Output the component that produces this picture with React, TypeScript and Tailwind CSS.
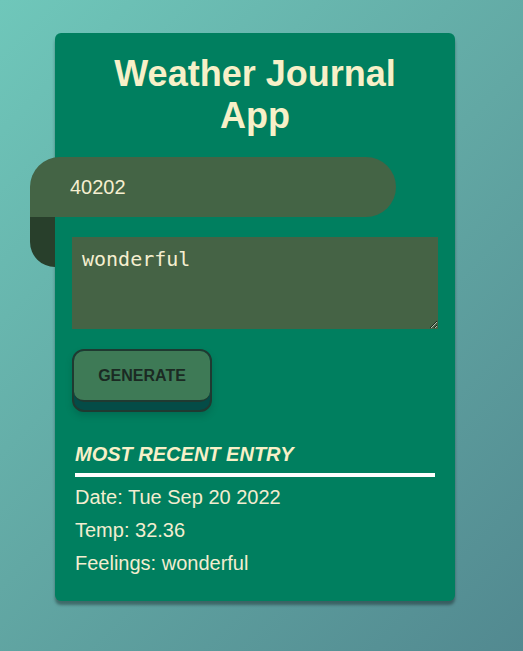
import React from "react";

const App = () => {
  return (
    <div
      className="w-[523px] h-[651px] overflow-hidden bg-[linear-gradient(135deg,#6fc7ba_0%,#62a8a4_50%,#528990_100%)] pt-[33px]"
      style={{ fontFamily: '"Liberation Sans", Arial, sans-serif' }}
    >
      <div className="ml-[55px] w-[400px] h-[568px] rounded-[6px] bg-[#007f5f] shadow-[0_4px_3px_rgba(0,0,0,0.35)] pt-[20px] px-[17px]">
        <h1 className="text-center text-[36px] leading-[42px] font-bold text-[#f7f0c8]">
          Weather Journal
          <br />
          App
        </h1>

        <div className="relative mt-[20px] ml-[-42px] w-[366px] h-[110px]">
          <div className="absolute left-0 top-[30px] w-[25px] h-[80px] rounded-bl-[25px] bg-[#283f2b]" />
          <input
            type="text"
            defaultValue="40202"
            className="relative block w-[366px] h-[60px] rounded-[30px] rounded-bl-none bg-[#446445] pl-[40px] text-[20px] text-[#f5efd0] outline-none"
          />
        </div>

        <textarea
          defaultValue="wonderful"
          className="block mt-[-30px] w-[366px] h-[92px] bg-[#456345] px-[10px] py-[9px] text-[20px] leading-[26px] text-[#f5efd0] outline-none"
          style={{ fontFamily: '"DejaVu Sans Mono", monospace' }}
        />

        <div className="mt-[20px] w-[140px] h-[63px] rounded-[12px] border-2 border-[#1f3a31] bg-[#044c47] shadow-[0_4px_6px_rgba(0,60,50,0.25)]">
          <button className="block w-full h-[51px] rounded-[10px] border-b-2 border-[#1f3a31] bg-[#3e7a56] text-[16px] font-bold text-[#1b2a23]">
            GENERATE
          </button>
        </div>

        <div className="px-[3px] mt-[30px]">
          <h2 className="text-[20px] leading-[24px] font-bold italic text-[#f7f0c8]">
            MOST RECENT ENTRY
          </h2>
          <div className="mt-[7px] h-[4px] w-[360px] bg-white" />
          <div className="mt-[4px] text-[20px] leading-[33px] text-[#f3edd0]">
            <div>Date: Tue Sep 20 2022</div>
            <div>Temp: 32.36</div>
            <div>Feelings: wonderful</div>
          </div>
        </div>
      </div>
    </div>
  );
};

export default App;
